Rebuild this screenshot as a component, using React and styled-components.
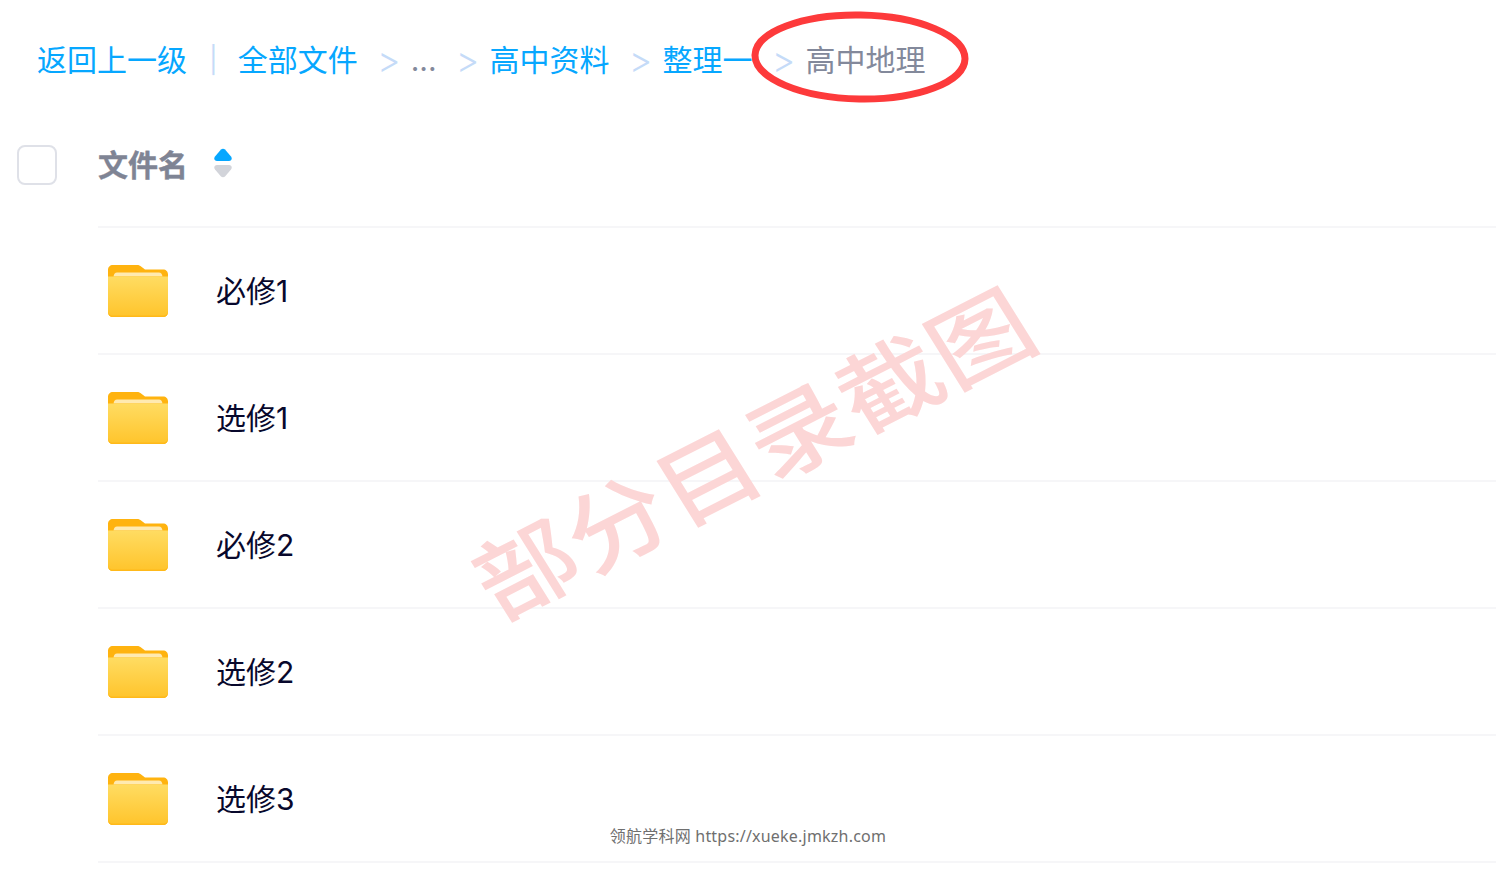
import styled, { createGlobalStyle } from 'styled-components';

const GlobalStyle = createGlobalStyle`
  html, body {
    margin: 0;
    padding: 0;
    background: #fff;
  }
  body {
    font-family: Inter, "Noto Sans CJK SC", sans-serif;
    overflow: hidden;
  }
`;

const Page = styled.div`
  position: relative;
  width: 1496px;
  height: 878px;
  overflow: hidden;
`;

const Breadcrumb = styled.nav`
  display: flex;
  align-items: center;
  height: 120px;
  padding-left: 37px;
  font-size: 30px;
  line-height: 40px;
  white-space: nowrap;
`;

const Crumb = styled.span`
  color: ${(p) => (p.$current ? '#83899b' : '#06a7ff')};
`;

const Pipe = styled.span`
  font-size: 26px;
  color: #c5dbf8;
  margin: 0 20px 0 22px;
`;

const Chevron = styled.span`
  display: flex;
  justify-content: center;
  flex: none;
  width: 20px;
  margin: 0 12px 0 21px;
  font-size: 36px;
  font-weight: 300;
  color: #c5dbf8;
`;

const Dots = styled.span`
  color: #83899b;
`;

const Ring = styled.svg`
  position: absolute;
  left: 745px;
  top: 6px;
`;

const TableHead = styled.div`
  display: flex;
  height: 108px;
`;

const CheckCol = styled.div`
  flex: 0 0 98px;
  padding: 25px 0 0 17px;
  box-sizing: border-box;
`;

const Checkbox = styled.div`
  width: 40px;
  height: 40px;
  box-sizing: border-box;
  border: 2px solid #dfe1e8;
  border-radius: 8px;
`;

const HeadCell = styled.div`
  flex: 1;
  display: flex;
  align-items: flex-start;
  padding-top: 25px;
  border-bottom: 2px solid #f6f6f8;
`;

const HeadTitle = styled.span`
  font-size: 30px;
  font-weight: 700;
  line-height: 40px;
  color: #7f8494;
  -webkit-text-stroke: 0.4px #7f8494;
`;

const SortIcon = styled.svg`
  margin: 3px 0 0 26px;
`;

const Row = styled.div`
  display: flex;
  align-items: center;
  height: 127px;
  box-sizing: border-box;
  margin-left: 98px;
  padding-left: 10px;
  border-bottom: 2px solid #f6f6f8;
`;

const FolderIcon = styled.svg`
  flex: none;
  margin-right: 48px;
`;

const RowName = styled.span`
  font-size: 30px;
  line-height: 40px;
  color: #08082c;
`;

const Watermark = styled.div`
  position: absolute;
  left: 751px;
  top: 449px;
  font-family: "Noto Sans CJK SC", sans-serif;
  font-size: 101px;
  font-weight: 500;
  line-height: 1;
  letter-spacing: 1px;
  color: #fcd6d6;
  white-space: nowrap;
  transform: translate(-50%, -50%) rotate(-27deg) skewX(5deg) scale(1, 0.9);
`;

const Footer = styled.div`
  position: absolute;
  left: 0;
  right: 0;
  top: 825px;
  text-align: center;
  font-family: "Noto Sans", "Noto Sans CJK SC", sans-serif;
  font-size: 16px;
  line-height: 22px;
  letter-spacing: 0.21px;
  color: #6f6f6f;
`;

const Folder = () => (
  <FolderIcon width="60" height="52" viewBox="0 0 60 52">
    <defs>
      <linearGradient id="folderFront" x1="0" y1="0" x2="0" y2="1">
        <stop offset="0" stopColor="#ffdc62" />
        <stop offset="1" stopColor="#ffc42b" />
      </linearGradient>
    </defs>
    <path
      d="M5 0h24c2 0 3 .6 4.400 1.800L37 4.500h18c3 0 5 2 5 5V20H0V5c0-3 2-5 5-5z"
      fill="#ffb30f"
    />
    <path d="M9 7.500h42c2 0 3 1.500 3.500 4H5.500c.5-2.500 1.500-4 3.500-4z" fill="#ffeab0" />
    <path
      d="M0 11.500h60V47c0 3-2 5-5 5H5c-3 0-5-2-5-5z"
      fill="url(#folderFront)"
    />
    <path d="M0 47v-1.500c0 3 2 5 5 5h50c3 0 5-2 5-5V47c0 3-2 5-5 5H5c-3 0-5-2-5-5z" fill="#ffb91a" />
  </FolderIcon>
);

const rows = ['必修1', '选修1', '必修2', '选修2', '选修3'];

export default function App() {
  return (
    <Page>
      <GlobalStyle />
      <Breadcrumb>
        <Crumb>返回上一级</Crumb>
        <Pipe>|</Pipe>
        <Crumb>全部文件</Crumb>
        <Chevron>&gt;</Chevron>
        <Dots>...</Dots>
        <Chevron>&gt;</Chevron>
        <Crumb>高中资料</Crumb>
        <Chevron>&gt;</Chevron>
        <Crumb>整理一</Crumb>
        <Chevron>&gt;</Chevron>
        <Crumb $current>高中地理</Crumb>
      </Breadcrumb>
      <Ring width="230" height="102" viewBox="0 0 230 102">
        <ellipse
          cx="115"
          cy="51"
          rx="105"
          ry="42"
          fill="none"
          stroke="#fd3a3b"
          strokeWidth="7"
          transform="rotate(1 115 51)"
        />
      </Ring>
      <TableHead>
        <CheckCol>
          <Checkbox />
        </CheckCol>
        <HeadCell>
          <HeadTitle>文件名</HeadTitle>
          <SortIcon width="18" height="30" viewBox="0 0 18 30">
            <path
              d="M7 1.500c1-1 3-1 4 0l6 7c1.500 2 .5 4.500-2 4.500H3C.5 13-.5 10.500 1 8.500z"
              fill="#06a7ff"
            />
            <path
              d="M7 28.500c1 1 3 1 4 0l6-7c1.500-2 .5-4.500-2-4.500H3c-2.500 0-3.500 2.500-2 4.500z"
              fill="#d2d4da"
            />
          </SortIcon>
        </HeadCell>
      </TableHead>
      {rows.map((name) => (
        <Row key={name}>
          <Folder />
          <RowName>{name}</RowName>
        </Row>
      ))}
      <Watermark>部分目录截图</Watermark>
      <Footer>领航学科网 https://xueke.jmkzh.com</Footer>
    </Page>
  );
}
